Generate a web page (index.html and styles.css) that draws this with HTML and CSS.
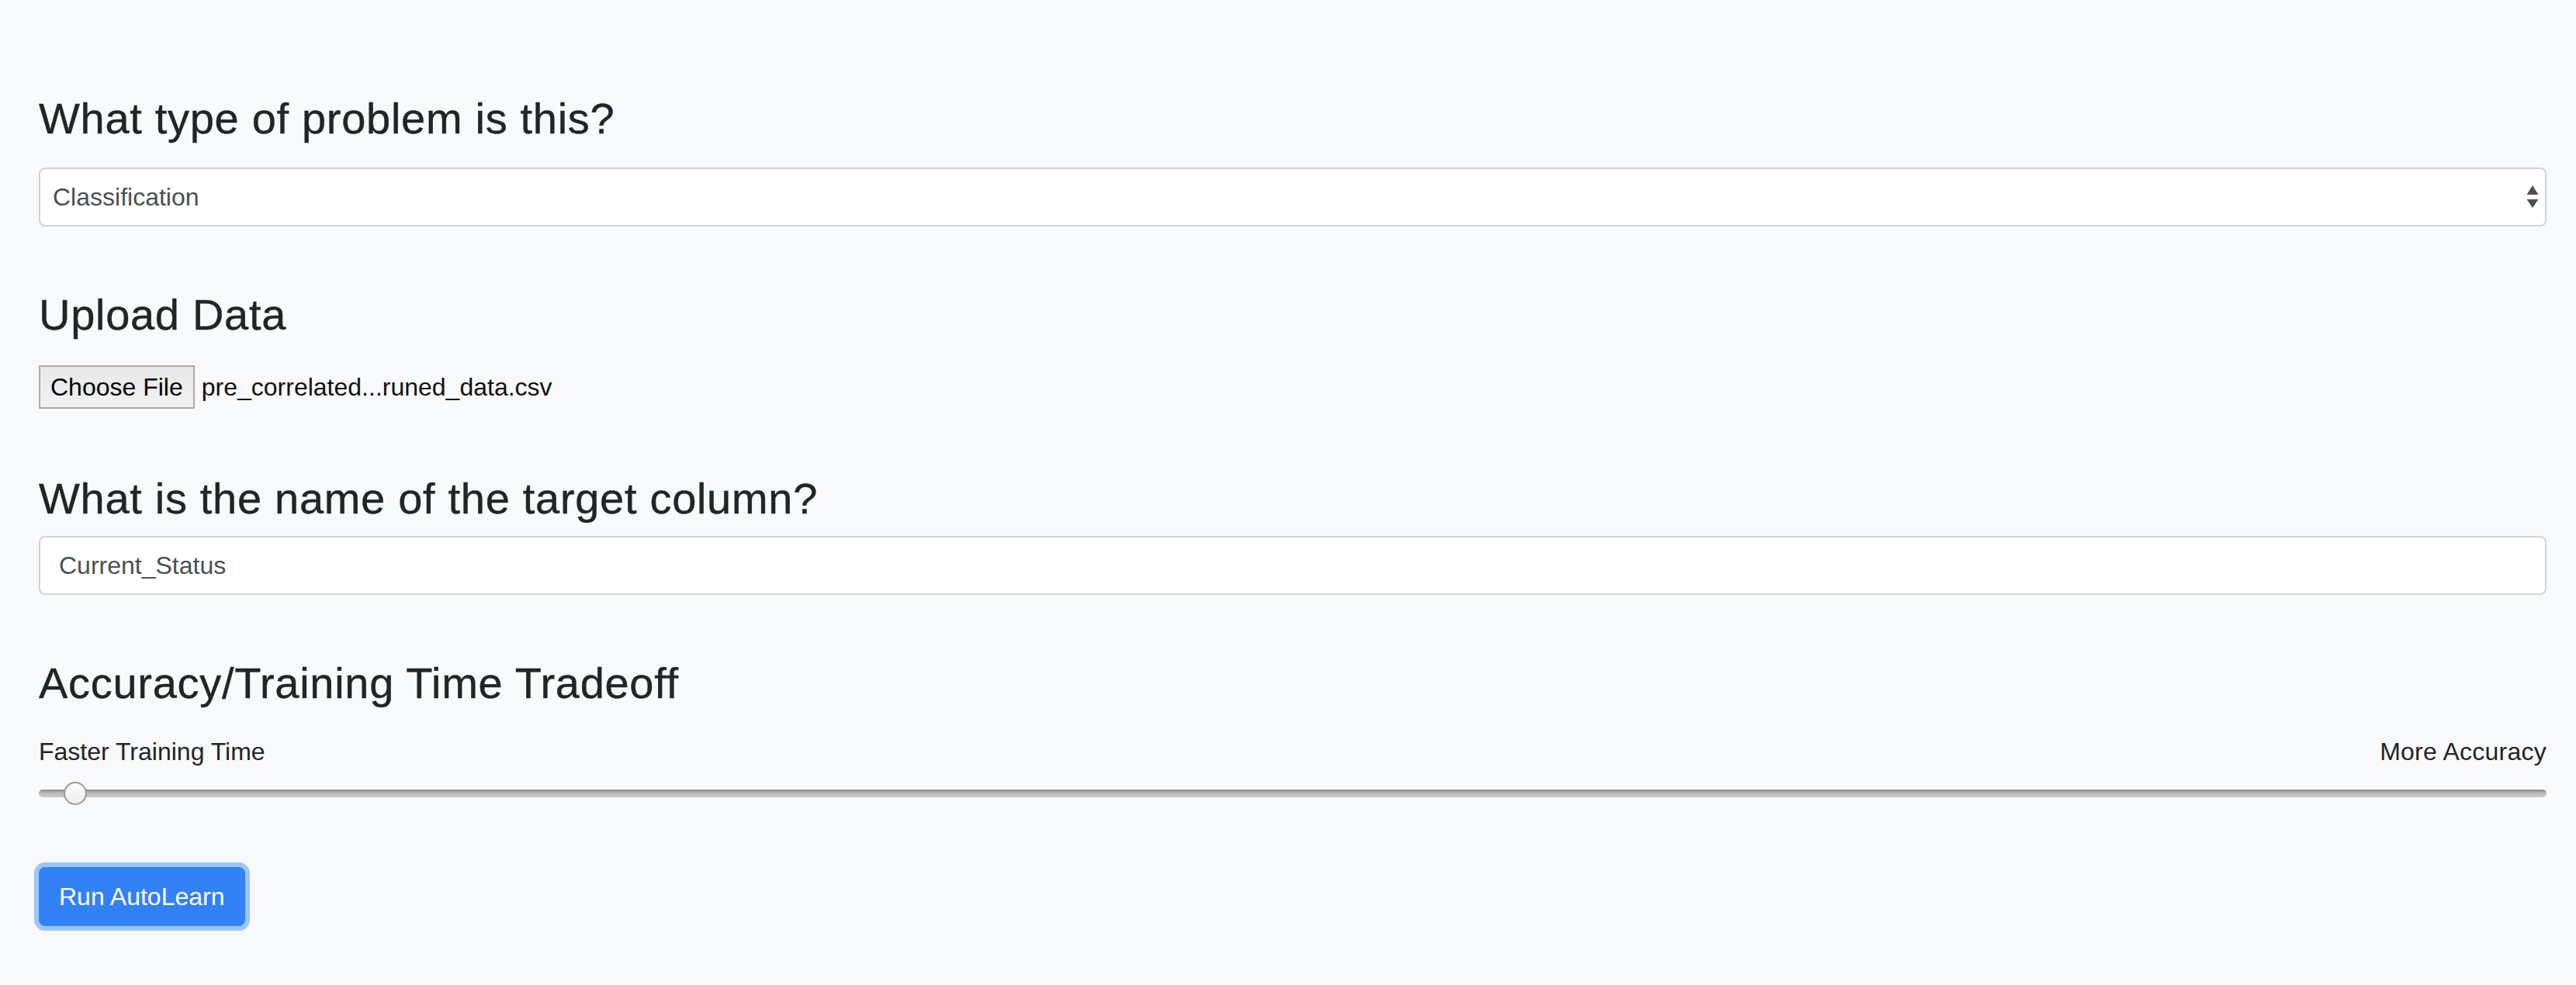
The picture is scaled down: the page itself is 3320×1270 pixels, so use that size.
FILE: index.html
```html
<!DOCTYPE html>
<html lang="en">
<head>
<meta charset="utf-8">
<title>AutoLearn</title>
<link rel="stylesheet" href="styles.css">
</head>
<body>
<main class="page">
  <section class="field">
    <h3 class="section-title gap-30">What type of problem is this?</h3>
    <div class="select-wrap">
      <select class="control select">
        <option>Classification</option>
        <option>Regression</option>
      </select>
      <svg class="select-arrows" width="16" height="30" viewBox="0 0 16 30" aria-hidden="true">
        <polygon points="0.5,13 8,1 15.5,13" fill="#4a4f57"/>
        <polygon points="0.5,19 15.5,19 8,30" fill="#4a4f57"/>
      </svg>
    </div>
  </section>

  <section class="field field-file">
    <h3 class="section-title gap-32">Upload Data</h3>
    <div class="file-row">
      <button type="button" class="file-btn">Choose File</button>
      <span class="file-name">pre_correlated...runed_data.csv</span>
    </div>
  </section>

  <section class="field">
    <h3 class="section-title gap-15">What is the name of the target column?</h3>
    <input class="control text-input" type="text" value="Current_Status">
  </section>

  <section class="field">
    <h3 class="section-title gap-31">Accuracy/Training Time Tradeoff</h3>
    <div class="range-labels">
      <span>Faster Training Time</span>
      <span class="label-right">More Accuracy</span>
    </div>
    <input class="range" type="range" min="0" max="100" value="1">
  </section>

  <button type="button" class="btn-run">Run AutoLearn</button>
</main>
</body>
</html>
```

FILE: styles.css
```css
html, body {
  margin: 0;
  background: #f8f9fa;
}

body {
  font-family: "Liberation Sans", Arial, Helvetica, sans-serif;
  font-size: 32px;
  line-height: 1.5;
  color: #212529;
}

.page {
  padding: 119px 38px 60px 50px;
}

.field {
  margin-bottom: 80px;
}

.field-file {
  margin-bottom: 82px;
}

.section-title {
  margin: 0;
  font-size: 56px;
  line-height: 67px;
  font-weight: 400;
  letter-spacing: 0.7px;
  color: #212529;
  -webkit-text-stroke: 0.4px #212529;
}

.gap-30 { margin-bottom: 30px; }
.gap-32 { margin-bottom: 32px; }
.gap-15 { margin-bottom: 15px; }
.gap-31 { margin-bottom: 31px; }

.control {
  display: block;
  box-sizing: border-box;
  width: 100%;
  height: 76px;
  margin: 0;
  font-family: inherit;
  font-size: 32px;
  color: #495057;
  background: #fff;
  border: 2px solid #ced4da;
  border-radius: 8px;
  outline: none;
}

.select-wrap {
  position: relative;
}

.select {
  -webkit-appearance: none;
  appearance: none;
  padding: 0 40px 0 16px;
}

.select-arrows {
  position: absolute;
  right: 10px;
  top: 22px;
  pointer-events: none;
}

.text-input {
  padding: 0 24px;
}

.file-row {
  display: flex;
  align-items: center;
  gap: 9px;
}

.file-btn {
  box-sizing: border-box;
  height: 56px;
  padding: 0 13px;
  font-family: inherit;
  font-size: 32px;
  color: #000;
  background: linear-gradient(#e8e8e8, #f1f1f1);
  border: 2px solid #aaaaaa;
  border-radius: 0;
}

.file-name {
  font-size: 32px;
  color: #111;
}

.range-labels {
  display: flex;
  justify-content: space-between;
  line-height: 48px;
  margin-bottom: 15px;
}

.label-right {
  letter-spacing: 0.25px;
}

.range {
  -webkit-appearance: none;
  appearance: none;
  display: block;
  width: 100%;
  height: 30px;
  margin: 0 0 80px;
  padding: 0;
  background: transparent;
}

.range::-webkit-slider-runnable-track {
  height: 10px;
  border-radius: 5px;
  background: linear-gradient(#858585 0, #9e9e9e 20%, #bdbdbd 50%, #cacaca 100%);
}

.range::-webkit-slider-thumb {
  -webkit-appearance: none;
  appearance: none;
  box-sizing: border-box;
  width: 30px;
  height: 30px;
  margin-top: -10px;
  border-radius: 50%;
  border: 2px solid #999;
  background: linear-gradient(#ffffff, #ececec);
}

.btn-run {
  box-sizing: border-box;
  height: 76px;
  padding: 0 24px;
  font-family: inherit;
  font-size: 32px;
  color: #fff;
  background: #3381f6;
  border: 2px solid #3381f6;
  border-radius: 8px;
  box-shadow: 0 0 0 6px #9cc5fa;
}
```
